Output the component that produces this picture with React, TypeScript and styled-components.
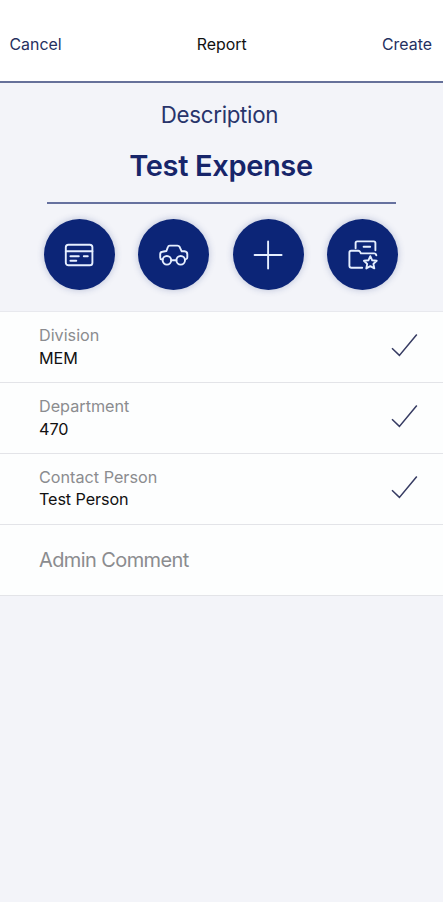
import React from 'react';
import styled, { createGlobalStyle } from 'styled-components';

const GlobalStyle = createGlobalStyle`
  * { box-sizing: border-box; }
  html, body { margin: 0; padding: 0; background: #f3f4f9; }
  body { font-family: Inter, "Liberation Sans", sans-serif; }
  button { font: inherit; border: 0; padding: 0; background: none; cursor: pointer; }
`;

const Screen = styled.main`
  min-height: 902px;
  background: #f3f4f9;
`;

const Header = styled.header`
  display: grid;
  grid-template-columns: 1fr auto 1fr;
  align-items: center;
  height: 83px;
  padding: 8px 11px 0 9.5px;
  background: #fff;
  border-bottom: 2px solid #66719a;
`;

const HeaderAction = styled.button<{ $end?: boolean }>`
  && { font-size: 15.9px; }
  line-height: 20px;
  justify-self: ${p => (p.$end ? 'end' : 'start')};
  color: #25305f;
`;

const HeaderTitle = styled.h1`
  margin: 0;
  font-size: 15.9px;
  line-height: 20px;
  font-weight: 400;
  color: #111;
  padding-left: 2px;
`;

const Summary = styled.section`
  height: 229px;
  padding-top: 17px;
  border-bottom: 1px solid #e8e9ee;
  display: flex;
  flex-direction: column;
  align-items: center;
`;

const FieldLabel = styled.label`
  font-size: 22.3px;
  line-height: 30px;
  letter-spacing: -0.3px;
  color: #28346b;
  margin-right: 4px;
`;

const FieldValue = styled.div`
  width: 349px;
  height: 74px;
  padding: 17px 1px 0 0;
  border-bottom: 2px solid #66719f;
  text-align: center;
  font-size: 29px;
  line-height: 38px;
  font-weight: 600;
  letter-spacing: -0.35px;
  color: #17256a;
`;

const Actions = styled.div`
  display: flex;
  gap: 23.6px;
  margin: 15px 1px 0 0;
`;

const RoundButton = styled.button`
  display: grid;
  place-items: center;
  width: 71px;
  height: 71px;
  border-radius: 50%;
  && { background: #0c2577; }
  box-shadow: 0 0 7px rgba(50, 70, 140, 0.3);
`;

const Glyph = styled.svg`
  width: 30px;
  height: 30px;
  fill: none;
  stroke: #e6efff;
  stroke-width: 1.9;
  stroke-linecap: round;
  stroke-linejoin: round;
`;

const List = styled.section`
  background: #fdfefe;
`;

const Row = styled.div`
  display: flex;
  align-items: center;
  justify-content: space-between;
  height: 71px;
  padding: 0 25px 0 39px;
  border-bottom: 1px solid #e3e4e8;
`;

const RowText = styled.div<{ $tight?: boolean }>`
  display: grid;
  gap: ${p => (p.$tight ? '0' : '1px')};
  margin-bottom: ${p => (p.$tight ? '3px' : '1px')};
  font-size: 16.2px;
  line-height: 22px;
`;

const RowLabel = styled.div`
  color: #8b8c8f;
`;

const RowValue = styled.div<{ $tight?: boolean }>`
  color: #111;
  letter-spacing: ${p => (p.$tight ? '-0.1px' : '0')};
`;

const Placeholder = styled.div`
  font-size: 20px;
  line-height: 26px;
  letter-spacing: -0.6px;
  color: #8b8c8f;
`;

const Tick = styled.svg`
  width: 28px;
  height: 26px;
  margin-bottom: 3px;
  fill: none;
  stroke: #363b62;
  stroke-width: 1.5;
`;

const CardIcon = () => (
  <Glyph viewBox="0 0 30 30">
    <rect x="1.8" y="4.7" width="26.6" height="20.6" rx="2.6" />
    <path d="M1.8 11.3H28.4M6.4 16.3H14.8M19.8 16.3H23.8M6.4 20.7H12.3" />
  </Glyph>
);

const CarIcon = () => (
  <Glyph viewBox="0 0 30 30">
    <circle cx="7.9" cy="20.3" r="4.3" />
    <circle cx="21.7" cy="20.3" r="4.3" />
    <path d="M12.2 20.3H17.4M3.7 19.4H2.8Q1.2 19.2 1.2 17.4V14.2Q1.2 12 3.4 11.8L7.4 11L8.9 7Q9.3 5.6 10.8 5.6H18.5Q19.9 5.6 20.6 6.8L22.7 11.3H25.5Q28.3 11.6 28.3 14.3V17.2Q28.3 19.2 26.7 19.4H25.9" />
  </Glyph>
);

const PlusIcon = () => (
  <Glyph viewBox="0 0 30 30">
    <path d="M1.6 15H28.6M15.1 1.5V28.5" />
  </Glyph>
);

const FolderStarIcon = () => (
  <Glyph viewBox="0 0 30 30">
    <path d="M7.6 8.3V3Q7.6 1.4 9.2 1.4H25.8Q27.4 1.4 27.4 3V10.2M15.6 6.7H22.2" />
    <path d="M14.2 27.8H3.4Q1.4 27.8 1.4 25.7V12.6Q1.4 10.8 3.2 10.8H10.4Q11.6 10.8 12.1 11.8L12.9 13.4H26.1Q28 13.4 28.3 15.4" />
    <path d="M22.3 16.2L24.2 20.3L28.7 20.8L25.4 23.9L26.3 28.4L22.3 26.2L18.3 28.4L19.2 23.9L15.9 20.8L20.4 20.3Z" />
  </Glyph>
);

const actions = [
  { name: 'Card expense', Icon: CardIcon },
  { name: 'Mileage', Icon: CarIcon },
  { name: 'Add', Icon: PlusIcon },
  { name: 'Saved folder', Icon: FolderStarIcon },
];

const fields = [
  { label: 'Division', value: 'MEM' },
  { label: 'Department', value: '470' },
  { label: 'Contact Person', value: 'Test Person', tight: true },
];

export default function App() {
  return (
    <Screen>
      <GlobalStyle />
      <Header>
        <HeaderAction>Cancel</HeaderAction>
        <HeaderTitle>Report</HeaderTitle>
        <HeaderAction $end>Create</HeaderAction>
      </Header>
      <Summary>
        <FieldLabel>Description</FieldLabel>
        <FieldValue>Test Expense</FieldValue>
        <Actions>
          {actions.map(({ name, Icon }) => (
            <RoundButton key={name} aria-label={name}>
              <Icon />
            </RoundButton>
          ))}
        </Actions>
      </Summary>
      <List>
        {fields.map(({ label, value, tight }) => (
          <Row key={label}>
            <RowText $tight={tight}>
              <RowLabel>{label}</RowLabel>
              <RowValue $tight={tight}>{value}</RowValue>
            </RowText>
            <Tick viewBox="0 0 28 26">
              <path d="M2 15.2L9.4 22.4L26.8 1.4" />
            </Tick>
          </Row>
        ))}
        <Row>
          <Placeholder>Admin Comment</Placeholder>
        </Row>
      </List>
    </Screen>
  );
}
